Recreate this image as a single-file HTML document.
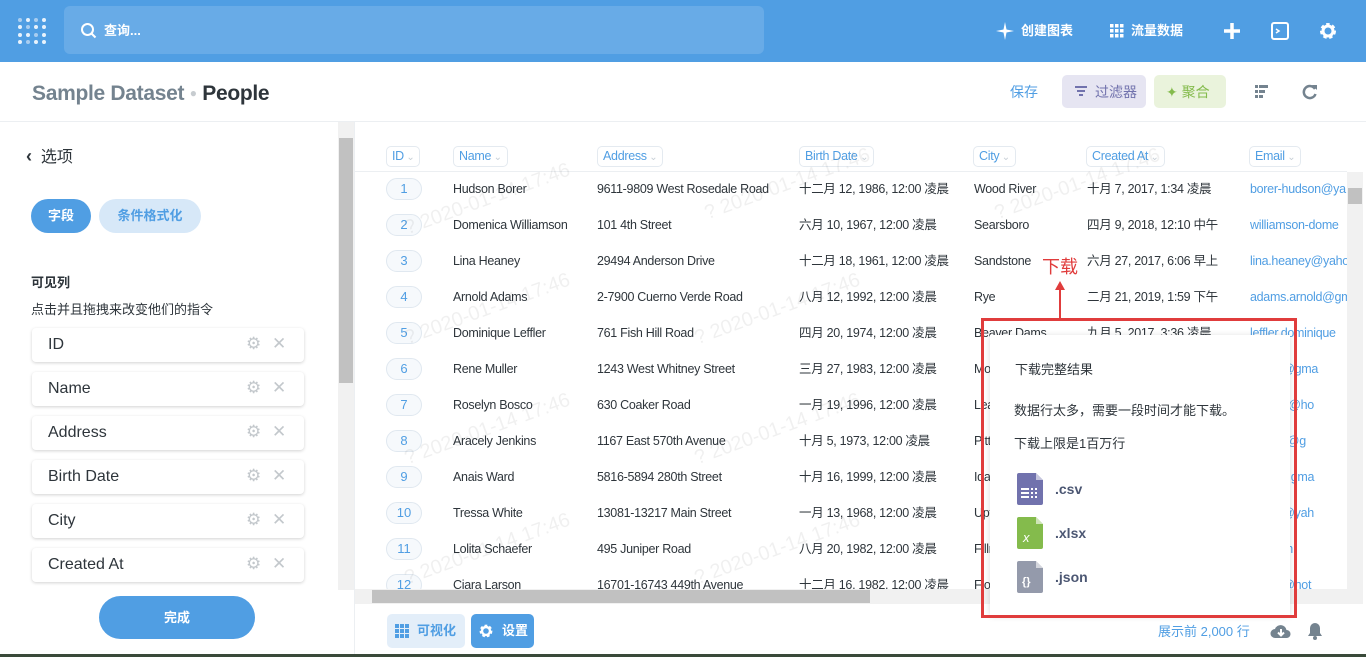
<!DOCTYPE html>
<html><head><meta charset="utf-8"><style>
*{box-sizing:border-box;margin:0;padding:0}
body{width:1366px;height:657px;position:relative;overflow:hidden;background:#fff;font-family:"Liberation Sans","Noto Sans CJK SC",sans-serif;color:#2e353b}
.a{position:absolute;white-space:nowrap;line-height:18px}
.top{left:0;top:0;width:1366px;height:62px;background:#509ee3}
.srch{left:64px;top:6px;width:700px;height:48px;background:#68abe7;border-radius:6px}
.tw{color:#fff;font-size:13px;font-weight:bold}
.hdr{font-size:12.5px;color:#509ee3;border:1px solid #e4eaf0;border-radius:5px;height:21px;line-height:19px;padding:0 5px;top:146px;letter-spacing:-.3px}
.hdr:after{content:" ⌄";color:#c7cfd6;font-size:10px}
.c{font-size:12.5px;color:#2e353b;letter-spacing:-.3px}
.idb{width:36px;height:22px;border:1px solid #e0e8f0;border-radius:11px;text-align:center;line-height:20px;color:#509ee3;font-size:13px;background:#f6f9fc}
.em{color:#509ee3;font-size:12.5px;letter-spacing:-.3px}
.fld{left:32px;width:272px;height:34px;border-radius:4px;box-shadow:0 1px 3px rgba(0,0,0,.18);background:#fff;font-size:16px;color:#2e353b}
.fld span{position:absolute;left:16px;top:8px}
.fld i{position:absolute;font-style:normal;color:#c3c8cc;font-size:17px;top:7px}
.wm{color:rgba(0,0,0,.06);font-size:20px;transform:rotate(-20deg)}
</style></head><body>
<div class="a top"></div>
<div class="a" style="left:18px;top:18px;width:28px;height:26px;display:grid;grid-template-columns:repeat(4,4px);gap:3px 4px">
<b style="background:#a9cdf0;width:4px;height:4px;border-radius:2px"></b><b style="background:#e8f2fc;width:4px;height:4px;border-radius:2px"></b><b style="background:#a9cdf0;width:4px;height:4px;border-radius:2px"></b><b style="background:#e8f2fc;width:4px;height:4px;border-radius:2px"></b>
<b style="background:#e8f2fc;width:4px;height:4px;border-radius:2px"></b><b style="background:#a9cdf0;width:4px;height:4px;border-radius:2px"></b><b style="background:#e8f2fc;width:4px;height:4px;border-radius:2px"></b><b style="background:#e8f2fc;width:4px;height:4px;border-radius:2px"></b>
<b style="background:#e8f2fc;width:4px;height:4px;border-radius:2px"></b><b style="background:#e8f2fc;width:4px;height:4px;border-radius:2px"></b><b style="background:#a9cdf0;width:4px;height:4px;border-radius:2px"></b><b style="background:#e8f2fc;width:4px;height:4px;border-radius:2px"></b>
<b style="background:#e8f2fc;width:4px;height:4px;border-radius:2px"></b><b style="background:#a9cdf0;width:4px;height:4px;border-radius:2px"></b><b style="background:#e8f2fc;width:4px;height:4px;border-radius:2px"></b><b style="background:#e8f2fc;width:4px;height:4px;border-radius:2px"></b></div>
<div class="a srch"></div>
<svg class="a" style="left:80px;top:22px" width="18" height="18" viewBox="0 0 18 18"><circle cx="7.5" cy="7.5" r="5.5" fill="none" stroke="#fff" stroke-width="2"/><path d="M11.5 11.5l4 4" stroke="#fff" stroke-width="2"/></svg>
<div class="a tw" style="left:104px;top:22px">查询...</div>
<svg class="a" style="left:996px;top:22px" width="18" height="18" viewBox="0 0 18 18"><path d="M9 0L10.5 7.5 18 9 10.5 10.5 9 18 7.5 10.5 0 9 7.5 7.5Z" fill="#fff"/></svg>
<div class="a tw" style="left:1021px;top:22px">创建图表</div>
<svg class="a" style="left:1110px;top:24px" width="14" height="14"><g fill="#fff"><rect x="0" y="0" width="3.5" height="3.5"/><rect x="5" y="0" width="3.5" height="3.5"/><rect x="10" y="0" width="3.5" height="3.5"/><rect x="0" y="5" width="3.5" height="3.5"/><rect x="5" y="5" width="3.5" height="3.5"/><rect x="10" y="5" width="3.5" height="3.5"/><rect x="0" y="10" width="3.5" height="3.5"/><rect x="5" y="10" width="3.5" height="3.5"/><rect x="10" y="10" width="3.5" height="3.5"/></g></svg>
<div class="a tw" style="left:1131px;top:22px">流量数据</div>
<svg class="a" style="left:1223px;top:22px" width="18" height="18"><path d="M9 1v16M1 9h16" stroke="#fff" stroke-width="3.5"/></svg>
<svg class="a" style="left:1270px;top:21px" width="20" height="20"><rect x="2" y="2" width="16" height="16" rx="2" fill="none" stroke="#fff" stroke-width="2"/><path d="M6 8l3 2-3 2" stroke="#fff" stroke-width="1.5" fill="none"/></svg>
<svg class="a" style="left:1318px;top:21px" width="20" height="20" viewBox="0 0 20 20"><circle cx="10" cy="10" r="6" fill="none" stroke="#fff" stroke-width="4" stroke-dasharray="3 2.3"/><circle cx="10" cy="10" r="5" fill="none" stroke="#fff" stroke-width="3"/></svg>

<div class="a" style="left:0;top:62px;width:1366px;height:60px;border-bottom:1px solid #eceff2"></div>
<div class="a" style="left:32px;top:81px;font-size:21px;line-height:24px;font-weight:bold;color:#74838f;letter-spacing:-.3px">Sample Dataset <span style="color:#c7ccd0;font-size:12px;vertical-align:3px">●</span> <span style="color:#2e353b">People</span></div>
<div class="a" style="left:1010px;top:83px;font-size:14px;color:#509ee3">保存</div>
<div class="a" style="left:1062px;top:75px;width:84px;height:33px;background:#e6e5f2;border-radius:5px"></div>
<svg class="a" style="left:1074px;top:85px" width="14" height="12"><path d="M1 2h12M3 6h8M5 10h4" stroke="#7172ad" stroke-width="2"/></svg>
<div class="a" style="left:1095px;top:83px;font-size:14px;color:#7172ad">过滤器</div>
<div class="a" style="left:1154px;top:75px;width:72px;height:33px;background:#eaf3dc;border-radius:5px"></div>
<div class="a" style="left:1166px;top:83px;font-size:14px;color:#84bb4c">✦ 聚合</div>
<svg class="a" style="left:1255px;top:85px" width="14" height="14"><g fill="#74838f"><rect x="0" y="0" width="3" height="3"/><rect x="4" y="0" width="9" height="3"/><rect x="0" y="5" width="3" height="3"/><rect x="4" y="5" width="6" height="3"/><rect x="0" y="10" width="3" height="3"/><rect x="4" y="10" width="4" height="3"/></g></svg>
<svg class="a" style="left:1302px;top:84px" width="16" height="16"><path d="M13 5A6 6 0 1 0 13.5 10" fill="none" stroke="#74838f" stroke-width="2.5"/><path d="M10 1l5 0 0 5z" fill="#74838f"/></svg>

<!-- left panel -->
<div class="a" style="left:26px;top:147px;font-size:16px;color:#2e353b"><b style="font-size:18px">‹</b>&nbsp; 选项</div>
<div class="a" style="left:31px;top:199px;width:60px;height:34px;border-radius:17px;background:#509ee3;color:#fff;font-size:13px;font-weight:bold;text-align:center;line-height:34px">字段</div>
<div class="a" style="left:99px;top:199px;width:102px;height:34px;border-radius:17px;background:#d7e8f8;color:#509ee3;font-size:13px;font-weight:bold;text-align:center;line-height:34px">条件格式化</div>
<div class="a" style="left:31px;top:274px;font-size:13px;font-weight:bold">可见列</div>
<div class="a" style="left:31px;top:301px;font-size:13px;color:#2e353b">点击并且拖拽来改变他们的指令</div>
<div class="a fld" style="top:328px"><span>ID</span><i style="left:214px">⚙</i><i style="left:240px">✕</i></div>
<div class="a fld" style="top:372px"><span>Name</span><i style="left:214px">⚙</i><i style="left:240px">✕</i></div>
<div class="a fld" style="top:416px"><span>Address</span><i style="left:214px">⚙</i><i style="left:240px">✕</i></div>
<div class="a fld" style="top:460px"><span>Birth Date</span><i style="left:214px">⚙</i><i style="left:240px">✕</i></div>
<div class="a fld" style="top:504px"><span>City</span><i style="left:214px">⚙</i><i style="left:240px">✕</i></div>
<div class="a fld" style="top:548px"><span>Created At</span><i style="left:214px">⚙</i><i style="left:240px">✕</i></div>
<div class="a" style="left:99px;top:596px;width:156px;height:43px;border-radius:22px;background:#509ee3;color:#fff;font-size:13px;font-weight:bold;text-align:center;line-height:43px">完成</div>
<div class="a" style="left:338px;top:122px;width:16px;height:468px;background:#f1f1f1"></div>
<div class="a" style="left:339px;top:138px;width:14px;height:245px;background:#c1c1c1"></div>
<div class="a" style="left:354px;top:122px;width:1px;height:535px;background:#eceff2"></div>

<!-- table -->
<div class="a hdr" style="left:386px">ID</div>
<div class="a hdr" style="left:453px">Name</div>
<div class="a hdr" style="left:597px">Address</div>
<div class="a hdr" style="left:799px">Birth Date</div>
<div class="a hdr" style="left:973px">City</div>
<div class="a hdr" style="left:1086px">Created At</div>
<div class="a hdr" style="left:1249px">Email</div>
<div class="a" style="left:355px;top:171px;width:992px;height:1px;background:#eceff2"></div>
<div id="rows"></div>
<div class="a wm" style="left:400px;top:190px">? 2020-01-14 17:46</div>
<div class="a wm" style="left:700px;top:175px">? 2020-01-14 17:46</div>
<div class="a wm" style="left:990px;top:175px">? 2020-01-14 17:46</div>
<div class="a wm" style="left:400px;top:300px">? 2020-01-14 17:46</div>
<div class="a wm" style="left:690px;top:300px">? 2020-01-14 17:46</div>
<div class="a wm" style="left:400px;top:420px">? 2020-01-14 17:46</div>
<div class="a wm" style="left:690px;top:420px">? 2020-01-14 17:46</div>
<div class="a wm" style="left:400px;top:540px">? 2020-01-14 17:46</div>
<div class="a wm" style="left:690px;top:540px">? 2020-01-14 17:46</div>

<div class="a" style="left:355px;top:589px;width:992px;height:15px;background:#f1f1f1"></div>
<div class="a" style="left:372px;top:590px;width:498px;height:13px;background:#c1c1c1"></div>
<div class="a" style="left:1347px;top:172px;width:16px;height:432px;background:#f1f1f1"></div>
<div class="a" style="left:1348px;top:188px;width:14px;height:16px;background:#c1c1c1"></div>

<!-- footer -->
<div class="a" style="left:387px;top:614px;width:78px;height:34px;background:#e3eef9;border-radius:5px"></div>
<svg class="a" style="left:395px;top:624px" width="14" height="14"><g fill="#509ee3"><rect x="0" y="0" width="4" height="4"/><rect x="5" y="0" width="4" height="4"/><rect x="10" y="0" width="4" height="4"/><rect x="0" y="5" width="4" height="4"/><rect x="5" y="5" width="4" height="4"/><rect x="10" y="5" width="4" height="4"/><rect x="0" y="10" width="4" height="4"/><rect x="5" y="10" width="4" height="4"/><rect x="10" y="10" width="4" height="4"/></g></svg>
<div class="a" style="left:417px;top:622px;font-size:13px;font-weight:bold;color:#509ee3">可视化</div>
<div class="a" style="left:471px;top:614px;width:63px;height:34px;background:#509ee3;border-radius:5px"></div>
<svg class="a" style="left:478px;top:623px" width="16" height="16" viewBox="0 0 20 20"><circle cx="10" cy="10" r="6" fill="none" stroke="#fff" stroke-width="4" stroke-dasharray="3 2.3"/><circle cx="10" cy="10" r="5" fill="none" stroke="#fff" stroke-width="3"/></svg>
<div class="a" style="left:502px;top:622px;font-size:13px;font-weight:bold;color:#fff">设置</div>
<div class="a" style="left:1158px;top:623px;font-size:13px;color:#509ee3">展示前 2,000 行</div>
<svg class="a" style="left:1270px;top:622px" width="22" height="18"><path d="M5 16a4.5 4.5 0 0 1 0-9 6 6 0 0 1 11.5 1 4 4 0 0 1 0 8z" fill="#74838f"/><path d="M11 7v6M8 10.5l3 3 3-3" stroke="#fff" stroke-width="2" fill="none"/></svg>
<svg class="a" style="left:1307px;top:622px" width="16" height="18"><path d="M8 1a5 5 0 0 0-5 5v5l-2 3h14l-2-3V6a5 5 0 0 0-5-5z" fill="#74838f"/><circle cx="8" cy="16" r="2" fill="#74838f"/></svg>

<!-- popup -->
<div class="a" style="left:990px;top:335px;width:300px;height:280px;background:#fff;box-shadow:0 1px 6px rgba(0,0,0,.15)"></div>
<div class="a" style="left:981px;top:318px;width:316px;height:300px;border:3px solid #e03c3c"></div>
<div class="a" style="left:1015px;top:361px;font-size:13px">下载完整结果</div>
<div class="a" style="left:1014px;top:402px;font-size:13px">数据行太多，需要一段时间才能下载。</div>
<div class="a" style="left:1014px;top:435px;font-size:13px">下载上限是1百万行</div>
<svg class="a" style="left:1017px;top:473px" width="26" height="32"><path d="M0 2a2 2 0 0 1 2-2h17l7 7v23a2 2 0 0 1-2 2H2a2 2 0 0 1-2-2z" fill="#7172ad"/><path d="M19 0v7h7" fill="#fff" opacity=".6"/><g fill="#fff"><rect x="4" y="15" width="8" height="2"/><rect x="4" y="19" width="8" height="2"/><rect x="4" y="23" width="8" height="2"/><rect x="14" y="15" width="2" height="2"/><rect x="18" y="15" width="2" height="2"/><rect x="14" y="19" width="2" height="2"/><rect x="18" y="19" width="2" height="2"/><rect x="14" y="23" width="2" height="2"/><rect x="18" y="23" width="2" height="2"/></g></svg>
<div class="a" style="left:1055px;top:480px;font-size:14px;font-weight:bold;color:#4c5773">.csv</div>
<svg class="a" style="left:1017px;top:517px" width="26" height="32"><path d="M0 2a2 2 0 0 1 2-2h17l7 7v23a2 2 0 0 1-2 2H2a2 2 0 0 1-2-2z" fill="#84bb4c"/><path d="M19 0v7h7" fill="#fff" opacity=".6"/><text x="6" y="25" fill="#fff" font-size="13" font-style="italic" font-family="Liberation Sans">x</text></svg>
<div class="a" style="left:1055px;top:524px;font-size:14px;font-weight:bold;color:#4c5773">.xlsx</div>
<svg class="a" style="left:1017px;top:561px" width="26" height="32"><path d="M0 2a2 2 0 0 1 2-2h17l7 7v23a2 2 0 0 1-2 2H2a2 2 0 0 1-2-2z" fill="#949aab"/><path d="M19 0v7h7" fill="#fff" opacity=".6"/><text x="5" y="24" fill="#fff" font-size="11" font-weight="bold" font-family="Liberation Sans">{}</text></svg>
<div class="a" style="left:1055px;top:568px;font-size:14px;font-weight:bold;color:#4c5773">.json</div>
<div class="a" style="left:1042px;top:257px;font-size:18px;line-height:20px;color:#e03c3c">下载</div>
<svg class="a" style="left:1054px;top:280px" width="12" height="40"><path d="M6 4v34" stroke="#e03c3c" stroke-width="2"/><path d="M1 10L6 1 11 10z" fill="#e03c3c"/></svg>
<div class="a" style="left:0;top:654px;width:1366px;height:3px;background:#3a4a3a"></div>
<script>
var d=[["Hudson Borer","9611-9809 West Rosedale Road","十二月 12, 1986, 12:00 凌晨","Wood River","十月 7, 2017, 1:34 凌晨","borer-hudson@ya"],
["Domenica Williamson","101 4th Street","六月 10, 1967, 12:00 凌晨","Searsboro","四月 9, 2018, 12:10 中午","williamson-dome"],
["Lina Heaney","29494 Anderson Drive","十二月 18, 1961, 12:00 凌晨","Sandstone","六月 27, 2017, 6:06 早上","lina.heaney@yaho"],
["Arnold Adams","2-7900 Cuerno Verde Road","八月 12, 1992, 12:00 凌晨","Rye","二月 21, 2019, 1:59 下午","adams.arnold@gm"],
["Dominique Leffler","761 Fish Hill Road","四月 20, 1974, 12:00 凌晨","Beaver Dams","九月 5, 2017, 3:36 凌晨","leffler.dominique"],
["Rene Muller","1243 West Whitney Street","三月 27, 1983, 12:00 凌晨","Morse","","muller@gma"],
["Roselyn Bosco","630 Coaker Road","一月 19, 1996, 12:00 凌晨","Leavenworth","","roselyn@ho"],
["Aracely Jenkins","1167 East 570th Avenue","十月 5, 1973, 12:00 凌晨","Pittsburg","","jenkins@g"],
["Anais Ward","5816-5894 280th Street","十月 16, 1999, 12:00 凌晨","Idaho","","anais@gma"],
["Tressa White","13081-13217 Main Street","一月 13, 1968, 12:00 凌晨","Upton","","tressa@yah"],
["Lolita Schaefer","495 Juniper Road","八月 20, 1982, 12:00 凌晨","Fillmore","","lolita@h"],
["Ciara Larson","16701-16743 449th Avenue","十二月 16, 1982, 12:00 凌晨","Florence","","larson@hot"]];
var h="";d.forEach(function(r,i){var y=178+i*36;if(i==11)y=574;
h+='<div class="a idb" style="left:386px;top:'+y+'px">'+(i+1)+'</div>';
var xs=[453,597,799,974,1087,1250];r.forEach(function(t,j){h+='<div class="a '+(j==5?'em':'c')+'" style="left:'+xs[j]+'px;top:'+(y+2)+'px">'+t+'</div>';});});
document.getElementById("rows").innerHTML='<div class="a" style="left:355px;top:172px;width:992px;height:417px;overflow:hidden"><div style="position:relative;left:-355px;top:-172px">'+h+'</div></div>';
</script>
</body></html>
